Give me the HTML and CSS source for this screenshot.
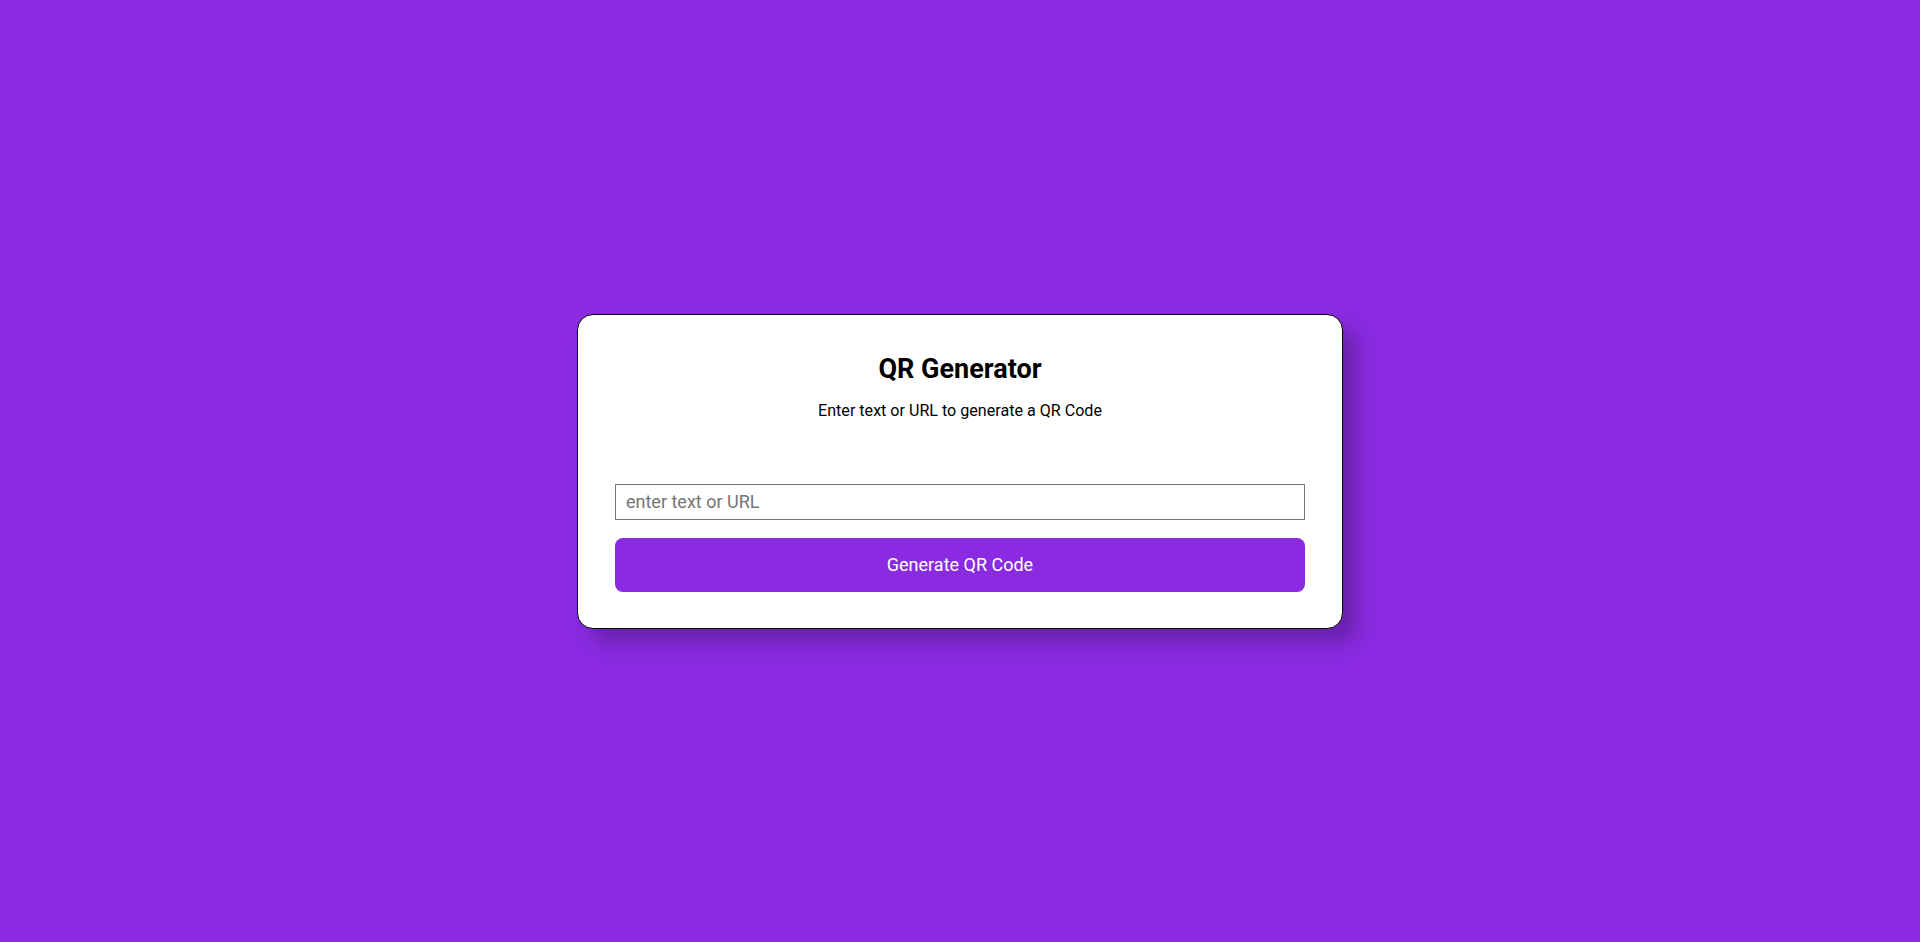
FILE: index.html
```html
<!DOCTYPE html>
<html lang="en">
<head>
<meta charset="UTF-8">
<title>QR Generator</title>
<link rel="stylesheet" href="styles.css">
</head>
<body>
<main class="page">
  <section class="card">
    <header class="card-head">
      <h1 class="title">QR Generator</h1>
      <p class="subtitle">Enter text or URL to generate a QR Code</p>
    </header>
    <div class="form">
      <input class="field" type="text" placeholder="enter text or URL">
      <button class="btn" type="button">Generate QR Code</button>
    </div>
  </section>
</main>
</body>
</html>
```
FILE: styles.css
```css
* { box-sizing: border-box; }
html, body { margin: 0; height: 100%; }
body {
  background: #8a2be2;
  font-family: Roboto, "Noto Sans", sans-serif;
}
.page {
  height: 100%;
  display: flex;
  align-items: center;
  justify-content: center;
}
.card {
  width: 766px;
  background: #fff;
  border: 1px solid #000;
  border-radius: 16px;
  padding: 38px 37px 36px;
  box-shadow: 14px 14px 20px rgba(0, 0, 0, 0.24);
  display: flex;
  flex-direction: column;
}
.card-head {
  text-align: center;
}
.title {
  margin: 0;
  font-size: 27px;
  font-weight: 700;
  line-height: 32px;
  color: #000;
}
.subtitle {
  margin: 16px 0 0;
  font-size: 16.1px;
  line-height: 19px;
  color: #000;
}
.form {
  margin-top: 64px;
  display: flex;
  flex-direction: column;
  gap: 18px;
}
.field {
  height: 36px;
  width: 100%;
  border: 1px solid #767676;
  padding: 0 10px;
  font-family: Roboto, sans-serif;
  font-size: 18px;
  color: #000;
  outline: none;
}
.field::placeholder { color: #757575; }
.btn {
  height: 54px;
  width: 100%;
  border: none;
  border-radius: 8px;
  background: #8a2be2;
  color: #fff;
  font-family: Roboto, sans-serif;
  font-size: 18px;
  cursor: pointer;
}
```
